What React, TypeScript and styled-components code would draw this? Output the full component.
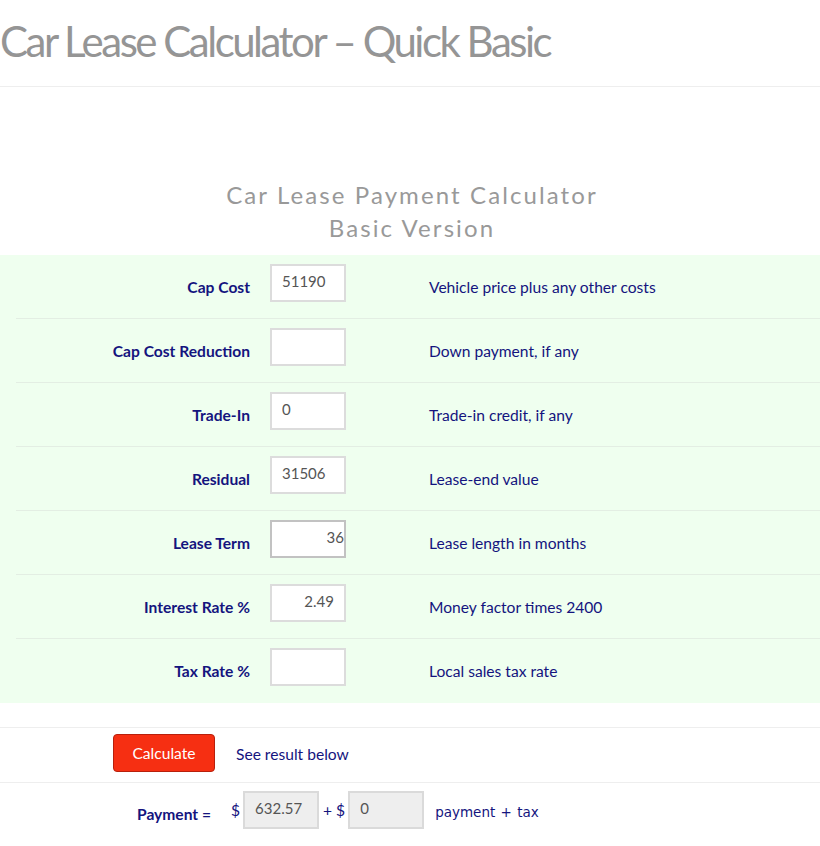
import React from 'react'
import styled, { createGlobalStyle } from 'styled-components'

const GlobalStyle = createGlobalStyle`
  body {
    margin: 0;
    background: #fff;
    font-family: Lato, 'Open Sans', sans-serif;
  }
`

const Page = styled.div`
  width: 820px;
`

const PageTitle = styled.h1`
  margin: 0;
  padding: 16px 0 20px;
  font-size: 42px;
  line-height: 50px;
  font-weight: 400;
  letter-spacing: -2.5px;
  color: #959595;
  border-bottom: 1px solid #eeeeee;
`

const CalcTitle = styled.h2`
  margin: 91px 0 11px;
  padding-left: 4px;
  font-size: 24px;
  line-height: 33px;
  font-weight: 400;
  letter-spacing: 2.1px;
  text-align: center;
  color: #999;
`

const Fields = styled.div`
  background: #efffef;
  margin-bottom: 24px;
`

const Row = styled.div<{ last?: boolean }>`
  margin-left: 16px;
  height: 64px;
  box-sizing: border-box;
  display: grid;
  grid-template-columns: 234px 139px 1fr;
  column-gap: 20px;
  border-bottom: ${p => (p.last ? 'none' : '1px solid #e3eee3')};
`

const Label = styled.div`
  align-self: center;
  text-align: right;
  font-size: 15.6px;
  font-weight: 700;
  color: #14147e;
`

const Hint = styled.div`
  align-self: center;
  font-size: 15.6px;
  color: #14147e;
`

const Field = styled.input<{ align?: 'left' | 'right'; focused?: boolean }>`
  margin-top: 9px;
  width: 76px;
  height: 38px;
  box-sizing: border-box;
  border: 2px solid ${p => (p.focused ? '#c2c2c2' : '#dcdcdc')};
  background: #fff;
  padding: 0 ${p => (p.focused ? '0' : '10px')} 4px 10px;
  font-family: Lato, sans-serif;
  font-size: 15px;
  color: #555;
  text-align: ${p => p.align || 'left'};
  outline: none;
`

const ActionRow = styled.div`
  border-top: 1px solid #eeeeee;
  border-bottom: 1px solid #eeeeee;
  height: 54px;
  display: flex;
  align-items: center;
  padding-left: 113px;
  gap: 21px;
`

const CalcButton = styled.button`
  width: 102px;
  height: 38px;
  margin-bottom: 4px;
  background: #f62f12;
  border: 1px solid #b8200c;
  border-radius: 4px;
  color: #fff;
  font-family: Lato, sans-serif;
  font-size: 15.6px;
  padding-bottom: 2px;
  cursor: pointer;
`

const Note = styled.span`
  font-size: 15.6px;
  color: #14147e;
  margin-bottom: 2px;
`

const ResultRow = styled.div`
  display: flex;
  align-items: center;
  padding-top: 7px;
  height: 40px;
`

const ResultLabel = styled.span`
  width: 211px;
  text-align: right;
  font-size: 15.6px;
  font-weight: 700;
  color: #14147e;
  padding-top: 7px;
`

const Sign = styled.span<{ left: number; right: number }>`
  margin: 0 ${p => p.right}px 0 ${p => p.left}px;
  font-size: 15.6px;
  color: #14147e;
`

const ResultField = styled.input`
  width: 76px;
  height: 38px;
  box-sizing: border-box;
  border: 2px solid #dadada;
  background: #eeeeee;
  padding: 0 10px 4px 10px;
  font-family: Lato, sans-serif;
  font-size: 15px;
  color: #555;
  outline: none;
`

const Tail = styled.span`
  margin-left: 11px;
  padding-top: 4px;
  font-family: 'DejaVu Sans', Verdana, sans-serif;
  font-size: 13.5px;
  color: #14147e;
  word-spacing: 1px;
`

type FieldDef = {
  label: string
  value: string
  hint: string
  align?: 'left' | 'right'
  focused?: boolean
}

const fields: FieldDef[] = [
  { label: 'Cap Cost', value: '51190', hint: 'Vehicle price plus any other costs' },
  { label: 'Cap Cost Reduction', value: '', hint: 'Down payment, if any' },
  { label: 'Trade-In', value: '0', hint: 'Trade-in credit, if any' },
  { label: 'Residual', value: '31506', hint: 'Lease-end value' },
  { label: 'Lease Term', value: '36', hint: 'Lease length in months', align: 'right', focused: true },
  { label: 'Interest Rate %', value: '2.49', hint: 'Money factor times 2400', align: 'right' },
  { label: 'Tax Rate %', value: '', hint: 'Local sales tax rate' },
]

export default function App() {
  return (
    <Page>
      <GlobalStyle />
      <PageTitle>Car Lease Calculator – Quick Basic</PageTitle>

      <CalcTitle>
        Car Lease Payment Calculator
        <br />
        Basic Version
      </CalcTitle>

      <Fields>
        {fields.map((f, i) => (
          <Row key={f.label} last={i === fields.length - 1}>
            <Label>{f.label}</Label>
            <Field defaultValue={f.value} align={f.align} focused={f.focused} />
            <Hint>{f.hint}</Hint>
          </Row>
        ))}
      </Fields>

      <ActionRow>
        <CalcButton>Calculate</CalcButton>
        <Note>See result below</Note>
      </ActionRow>

      <ResultRow>
        <ResultLabel>Payment =</ResultLabel>
        <Sign left={20} right={3}>$</Sign>
        <ResultField defaultValue="632.57" readOnly />
        <Sign left={4} right={3}>+ $</Sign>
        <ResultField defaultValue="0" readOnly />
        <Tail>payment + tax</Tail>
      </ResultRow>
    </Page>
  )
}
